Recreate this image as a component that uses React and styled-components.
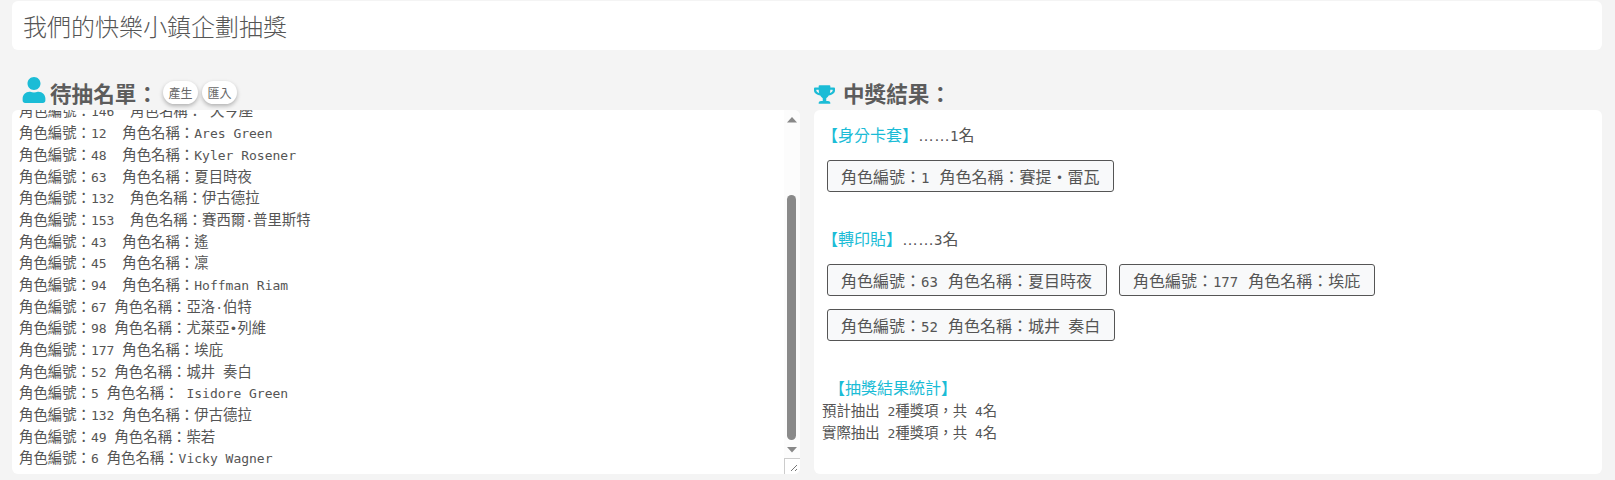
import React, { useLayoutEffect, useRef } from "react";
import styled, { createGlobalStyle } from "styled-components";
import { FaUser, FaTrophy } from "react-icons/fa";

const cyan = "#1bbcd6";
const grey = "#555";

const GlobalStyle = createGlobalStyle`
html, body {
    margin:0;
    padding:0;
    background:#f4f4f4;
}
body {
    font-family:"Noto Sans CJK TC", "Noto Sans", sans-serif;
    color:${grey};
}
`

const Page = styled.div`
width:1615px;
height:480px;
box-sizing:border-box;
padding:1px 13px 0 12px;
overflow:hidden;
`

const HeaderCard = styled.header`
height:49px;
background:#fff;
border-radius:6px;
display:flex;
align-items:center;
padding-left:11px;
font-size:24px;
font-weight:300;
`

const Columns = styled.main`
display:grid;
grid-template-columns:788px 788px;
column-gap:14px;
`

const ColumnHead = styled.div`
height:60px;
display:flex;
align-items:flex-end;
padding-bottom:1px;
box-sizing:border-box;
`

const Title = styled.h2`
margin:0;
font-size:21.6px;
line-height:32px;
font-weight:700;
color:#5c5c5c;
display:flex;
align-items:center;
`

const PersonIcon = styled(FaUser)`
color:${cyan};
width:24px;
height:26px;
margin:0 4px 6px 10px;
`

const CupIcon = styled(FaTrophy)`
color:${cyan};
width:21px;
height:19px;
margin:2px 8px 0 0;
`

const Pills = styled.div`
display:flex;
gap:4px;
margin-left:5px;
margin-bottom:5px;
`

const Pill = styled.button`
width:35px;
height:23px;
padding:0;
border:none;
border-radius:12px;
background:#fff;
color:#666;
font-family:inherit;
font-size:12px;
box-shadow:0 2px 4px rgba(0,0,0,.28);
`

const ListBox = styled.div`
height:364px;
background:#fff;
border-radius:6px;
overflow:hidden;
display:flex;
`

const NameList = styled.div`
flex:1;
overflow-y:auto;
padding:0 0 6px 7px;
font-size:14.4px;
white-space:pre;
`

const Row = styled.div`
height:21.7px;
line-height:21.7px;
`

const Rail = styled.div`
width:16px;
flex:none;
background:#fcfcfc;
display:flex;
flex-direction:column;
`

const RailArrow = styled.svg`
display:block;
flex:none;
width:16px;
height:${props => props.$h}px;
`

const Track = styled.div`
flex:1;
display:flex;
flex-direction:column;
justify-content:flex-end;
padding:0 4px 1px 3px;
`

const Thumb = styled.div`
height:245px;
background:#8a8a8a;
border-radius:5px;
`

const Corner = styled.svg`
display:block;
flex:none;
width:16px;
height:16px;
box-sizing:border-box;
background:#fff;
border-left:1px solid #ccc;
border-top:1px solid #ccc;
`

const Latin = styled.span`
font-family:"DejaVu Sans Mono", "Liberation Mono", monospace;
font-size:${props => props.$size};
line-height:1;
`

const Dots = styled.span`
font-family:"Liberation Sans", sans-serif;
`

const ResultPanel = styled.section`
height:364px;
box-sizing:border-box;
background:#fff;
border-radius:6px;
padding-top:12px;
`

const Prize = styled.div`
margin-bottom:34px;
`

const PrizeHead = styled.div`
padding-left:8px;
font-size:16px;
height:24px;
line-height:24px;
`

const Cyan = styled.span`
color:${cyan};
`

const ChipWrap = styled.div`
display:flex;
flex-wrap:wrap;
gap:13px 12px;
padding-left:13px;
margin-top:14px;
`

const Chip = styled.div`
height:32px;
box-sizing:border-box;
padding:0 14px 0 13px;
display:flex;
align-items:center;
white-space:pre;
font-size:16px;
background:#f8f9fa;
border:1px solid ${grey};
border-radius:3px;
`

const ChipPart = styled.span`
margin-right:10px;
&:last-child {
    margin-right:0;
}
`

const StatsHead = styled.div`
padding-left:15px;
font-size:16px;
line-height:24px;
`

const StatsLine = styled.div`
padding-left:8px;
font-size:14.4px;
height:21.7px;
line-height:21.7px;
white-space:pre;
`

// 英數字型比中文小一點
const Mixed = ({ text, size = "13px" }) => (
    <>
        {text.split(/([\x20-\x7e\u00b7\u2022]+)/).map((part, i) =>
            i % 2 === 1 ? <Latin key={i} $size={size}>{part}</Latin> : part
        )}
    </>
)

const rows = [
    "角色編號：21  角色名稱：Ares Green",
    "角色編號：77  角色名稱：夏目時夜",
    "角色編號：108  角色名稱：柴若",
    "角色編號：30  角色名稱：凜",
    "角色編號：86  角色名稱：遙",
    "角色編號：146  角色名稱： 天今座",
    "角色編號：12  角色名稱：Ares Green",
    "角色編號：48  角色名稱：Kyler Rosener",
    "角色編號：63  角色名稱：夏目時夜",
    "角色編號：132  角色名稱：伊古德拉",
    "角色編號：153  角色名稱：賽西爾·普里斯特",
    "角色編號：43  角色名稱：遙",
    "角色編號：45  角色名稱：凜",
    "角色編號：94  角色名稱：Hoffman Riam",
    "角色編號：67 角色名稱：亞洛·伯特",
    "角色編號：98 角色名稱：尤萊亞•列維",
    "角色編號：177 角色名稱：埃庇",
    "角色編號：52 角色名稱：城井 奏白",
    "角色編號：5 角色名稱： Isidore Green",
    "角色編號：132 角色名稱：伊古德拉",
    "角色編號：49 角色名稱：柴若",
    "角色編號：6 角色名稱：Vicky Wagner",
]

const prizes = [
    { name: "【身分卡套】", count: "1", winners: [{ id: "1", name: "賽提・雷瓦" }] },
    {
        name: "【轉印貼】",
        count: "3",
        winners: [
            { id: "63", name: "夏目時夜" },
            { id: "177", name: "埃庇" },
            { id: "52", name: "城井 奏白" },
        ],
    },
]

const App = () => {
    const listRef = useRef(null);

    useLayoutEffect(() => {
        listRef.current.scrollTop = listRef.current.scrollHeight;
    }, []);

    return (
        <Page>
            <GlobalStyle />
            <HeaderCard>我們的快樂小鎮企劃抽獎</HeaderCard>
            <Columns>
                <div>
                    <ColumnHead>
                        <Title><PersonIcon />待抽名單：</Title>
                        <Pills>
                            <Pill>產生</Pill>
                            <Pill>匯入</Pill>
                        </Pills>
                    </ColumnHead>
                    <ListBox>
                        <NameList ref={listRef}>
                            {rows.map((row, i) => <Row key={i}><Mixed text={row} /></Row>)}
                        </NameList>
                        <Rail>
                            <RailArrow $h={19} viewBox="0 0 16 19"><path d="M3 12.5h10L8 7z" fill="#888" /></RailArrow>
                            <Track><Thumb /></Track>
                            <RailArrow $h={17} viewBox="0 0 16 17"><path d="M3 6h10l-5 5.5z" fill="#888" /></RailArrow>
                            <Corner viewBox="0 0 15 15"><path d="M6 12l6-6M10 12l2-2" stroke="#777" fill="none" /></Corner>
                        </Rail>
                    </ListBox>
                </div>
                <div>
                    <ColumnHead>
                        <Title><CupIcon />中獎結果：</Title>
                    </ColumnHead>
                    <ResultPanel>
                        {prizes.map(prize => (
                            <Prize key={prize.name}>
                                <PrizeHead>
                                    <Cyan>{prize.name}</Cyan>
                                    <Dots>……</Dots>
                                    <Mixed text={prize.count} size="14px" />名
                                </PrizeHead>
                                <ChipWrap>
                                    {prize.winners.map(w => (
                                        <Chip key={w.id}>
                                            <ChipPart><Mixed text={`角色編號：${w.id}`} size="14px" /></ChipPart>
                                            <ChipPart><Mixed text={`角色名稱：${w.name}`} size="14px" /></ChipPart>
                                        </Chip>
                                    ))}
                                </ChipWrap>
                            </Prize>
                        ))}
                        <StatsHead><Cyan>【抽獎結果統計】</Cyan></StatsHead>
                        <StatsLine><Mixed text="預計抽出 2種獎項，共 4名" /></StatsLine>
                        <StatsLine><Mixed text="實際抽出 2種獎項，共 4名" /></StatsLine>
                    </ResultPanel>
                </div>
            </Columns>
        </Page>
    )
}

export default App
